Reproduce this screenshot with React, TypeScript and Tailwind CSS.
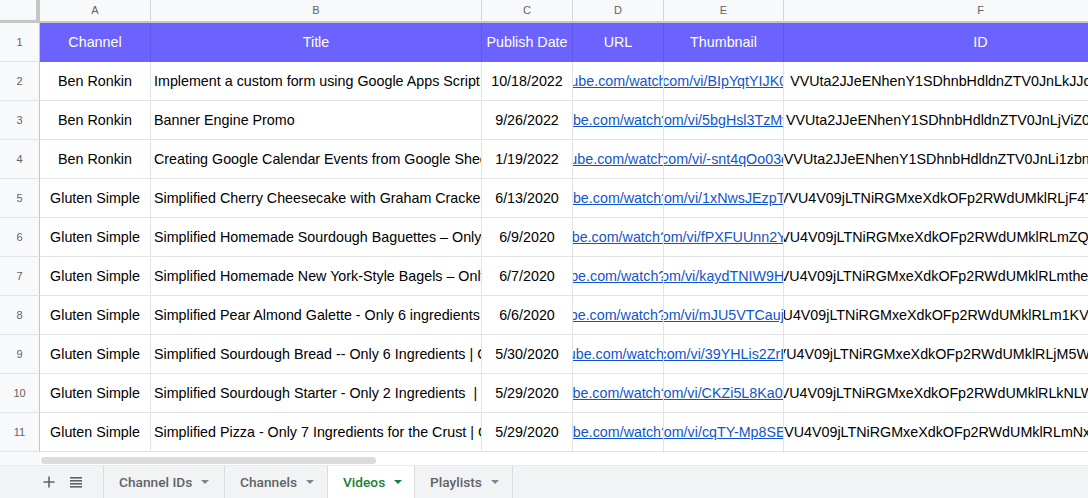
import React from 'react'

const BEN = 'UU-kbIxCazv5H8glwevvSWBg.'
const GLUTEN = 'UU8WOc-3bDc1ywd8ZvEgT2IQ.'

const rows = [
    { ch: 'Ben Ronkin', pre: BEN, title: 'Implement a custom form using Google Apps Script', date: '10/18/2022', vid: 'BIpYqtYIJK0' },
    { ch: 'Ben Ronkin', pre: BEN, title: 'Banner Engine Promo', date: '9/26/2022', vid: '5bgHsl3TzMw' },
    { ch: 'Ben Ronkin', pre: BEN, title: 'Creating Google Calendar Events from Google Sheets', date: '1/19/2022', vid: '-snt4qOo03c' },
    { ch: 'Gluten Simple', pre: GLUTEN, title: 'Simplified Cherry Cheesecake with Graham Cracker Crust', date: '6/13/2020', vid: '1xNwsJEzpTk' },
    { ch: 'Gluten Simple', pre: GLUTEN, title: 'Simplified Homemade Sourdough Baguettes – Only 4 Ingredients', date: '6/9/2020', vid: 'fPXFUUnn2Yc' },
    { ch: 'Gluten Simple', pre: GLUTEN, title: 'Simplified Homemade New York-Style Bagels – Only 5 Ingredients', date: '6/7/2020', vid: 'kaydTNIW9HQ' },
    { ch: 'Gluten Simple', pre: GLUTEN, title: 'Simplified Pear Almond Galette - Only 6 ingredients', date: '6/6/2020', vid: 'mJU5VTCaujM' },
    { ch: 'Gluten Simple', pre: GLUTEN, title: 'Simplified Sourdough Bread -- Only 6 Ingredients | Gluten Free', date: '5/30/2020', vid: '39YHLis2ZrE' },
    { ch: 'Gluten Simple', pre: GLUTEN, title: 'Simplified Sourdough Starter - Only 2 Ingredients  | Gluten Free', date: '5/29/2020', vid: 'CKZi5L8Ka0w' },
    { ch: 'Gluten Simple', pre: GLUTEN, title: 'Simplified Pizza - Only 7 Ingredients for the Crust | Gluten Free', date: '5/29/2020', vid: 'cqTY-Mp8SEc' },
]

const headers = ['Channel', 'Title', 'Publish Date', 'URL', 'Thumbnail', 'ID']
const letters = ['A', 'B', 'C', 'D', 'E', 'F']

const cell = 'h-[39px] pt-[2px] border-r border-b border-[#e2e3e3] flex items-center overflow-hidden whitespace-nowrap'
const rowHead = 'h-[39px] border-r border-b border-r-[#c4c7c5] border-b-[#e2e3e3] bg-[#f8f9fa] flex items-center justify-center text-[11px] text-[#5f6368]'

function Caret({ active }: { active?: boolean }) {
    return (
        <span className={`w-0 h-0 border-l-[4px] border-r-[4px] border-t-[4px] border-l-transparent border-r-transparent ${active ? 'border-t-[#188038]' : 'border-t-[#80868b]'}`}></span>
    )
}

function Tab({ label, w, active }: { label: string, w: string, active?: boolean }) {
    return (
        <div className={`${w} h-full flex items-center gap-[9px] pl-[15px] border-r border-[#dadce0] ${active ? 'bg-white text-[#188038]' : 'text-[#5f6368]'}`}>
            <span>{label}</span>
            <Caret active={active} />
        </div>
    )
}

export default function App() {
    return (
        <div className="w-[1088px] h-[498px] overflow-hidden flex flex-col bg-white font-['Liberation_Sans',Arial,sans-serif] text-black">
            <div className="h-[452px] overflow-hidden">
                <div className="grid grid-cols-[40px_111px_331px_91px_91px_120px_394px] w-max">
                    {/* column letters */}
                    <div className="h-[23px] bg-[#f8f9fa] border-r-[4px] border-b-[3px] border-[#c4c7c5]"></div>
                    {letters.map((l) => (
                        <div key={l} className="h-[23px] bg-[#f8f9fa] border-r border-b-2 border-r-[#d3d5d6] border-b-[#c4c7c5] flex items-center justify-center text-[11px] text-[#5f6368]">{l}</div>
                    ))}

                    {/* header row */}
                    <div className={rowHead}>1</div>
                    {headers.map((h) => (
                        <div key={h} className="h-[39px] pt-[1px] bg-[#6c63ff] border-r border-[#5f57e8] flex items-center justify-center text-white text-[14.3px] whitespace-nowrap overflow-hidden">{h}</div>
                    ))}

                    {rows.map((r, i) => {
                        const url = `https://www.youtube.com/watch?v=${r.vid}`
                        const thumb = `https://i.ytimg.com/vi/${r.vid}/hqdefault.jpg`
                        const id = btoa(r.pre + r.vid)
                        return (
                            <React.Fragment key={i}>
                                <div className={rowHead}>{i + 2}</div>
                                <div className={`${cell} justify-center text-[14.3px]`}>{r.ch}</div>
                                <div className={`${cell} pl-[3px] text-[14.3px] whitespace-pre`}>{r.title}</div>
                                <div className={`${cell} justify-center text-[14.3px]`}>{r.date}</div>
                                <div className={`${cell} justify-center text-[14.3px]`}>
                                    <span className="shrink-0 text-[#1155cc] underline">{url}</span>
                                </div>
                                <div className={`${cell} justify-center text-[14.3px]`}>
                                    <span className="shrink-0 text-[#1155cc] underline">{thumb}</span>
                                </div>
                                <div className={`${cell} justify-center text-[14.3px]`}>
                                    <span className="shrink-0">{id}</span>
                                </div>
                            </React.Fragment>
                        )
                    })}
                </div>
            </div>

            {/* horizontal scroll strip */}
            <div className="h-[13px] flex">
                <div className="w-[40px] bg-[#f8f9fa]"></div>
                <div className="flex-1 pt-[5px] pl-px">
                    <div className="w-[335px] h-[7px] rounded-full bg-[#dadce0]"></div>
                </div>
            </div>

            {/* sheet tabs */}
            <div className="h-[33px] flex bg-[#f1f3f4] border-t border-[#e8eaed] font-['Roboto',sans-serif] text-[13.7px] font-medium">
                <div className="w-[104px] h-full flex items-center pl-[42px] gap-[14px] border-r border-[#dadce0] text-[#5f6368]">
                    <svg width="14" height="14" viewBox="0 0 14 14" fill="none" stroke="currentColor" strokeWidth="1.6">
                        <path d="M7 1.5v11M1.5 7h11" />
                    </svg>
                    <svg width="12" height="12" viewBox="0 0 12 12" fill="currentColor">
                        <rect x="0" y="1" width="12" height="1.6" />
                        <rect x="0" y="4" width="12" height="1.6" />
                        <rect x="0" y="7" width="12" height="1.6" />
                        <rect x="0" y="10" width="12" height="1.6" />
                    </svg>
                </div>
                <Tab label="Channel IDs" w="w-[121px]" />
                <Tab label="Channels" w="w-[103px]" />
                <Tab label="Videos" w="w-[87px]" active />
                <Tab label="Playlists" w="w-[98px]" />
            </div>
        </div>
    )
}
